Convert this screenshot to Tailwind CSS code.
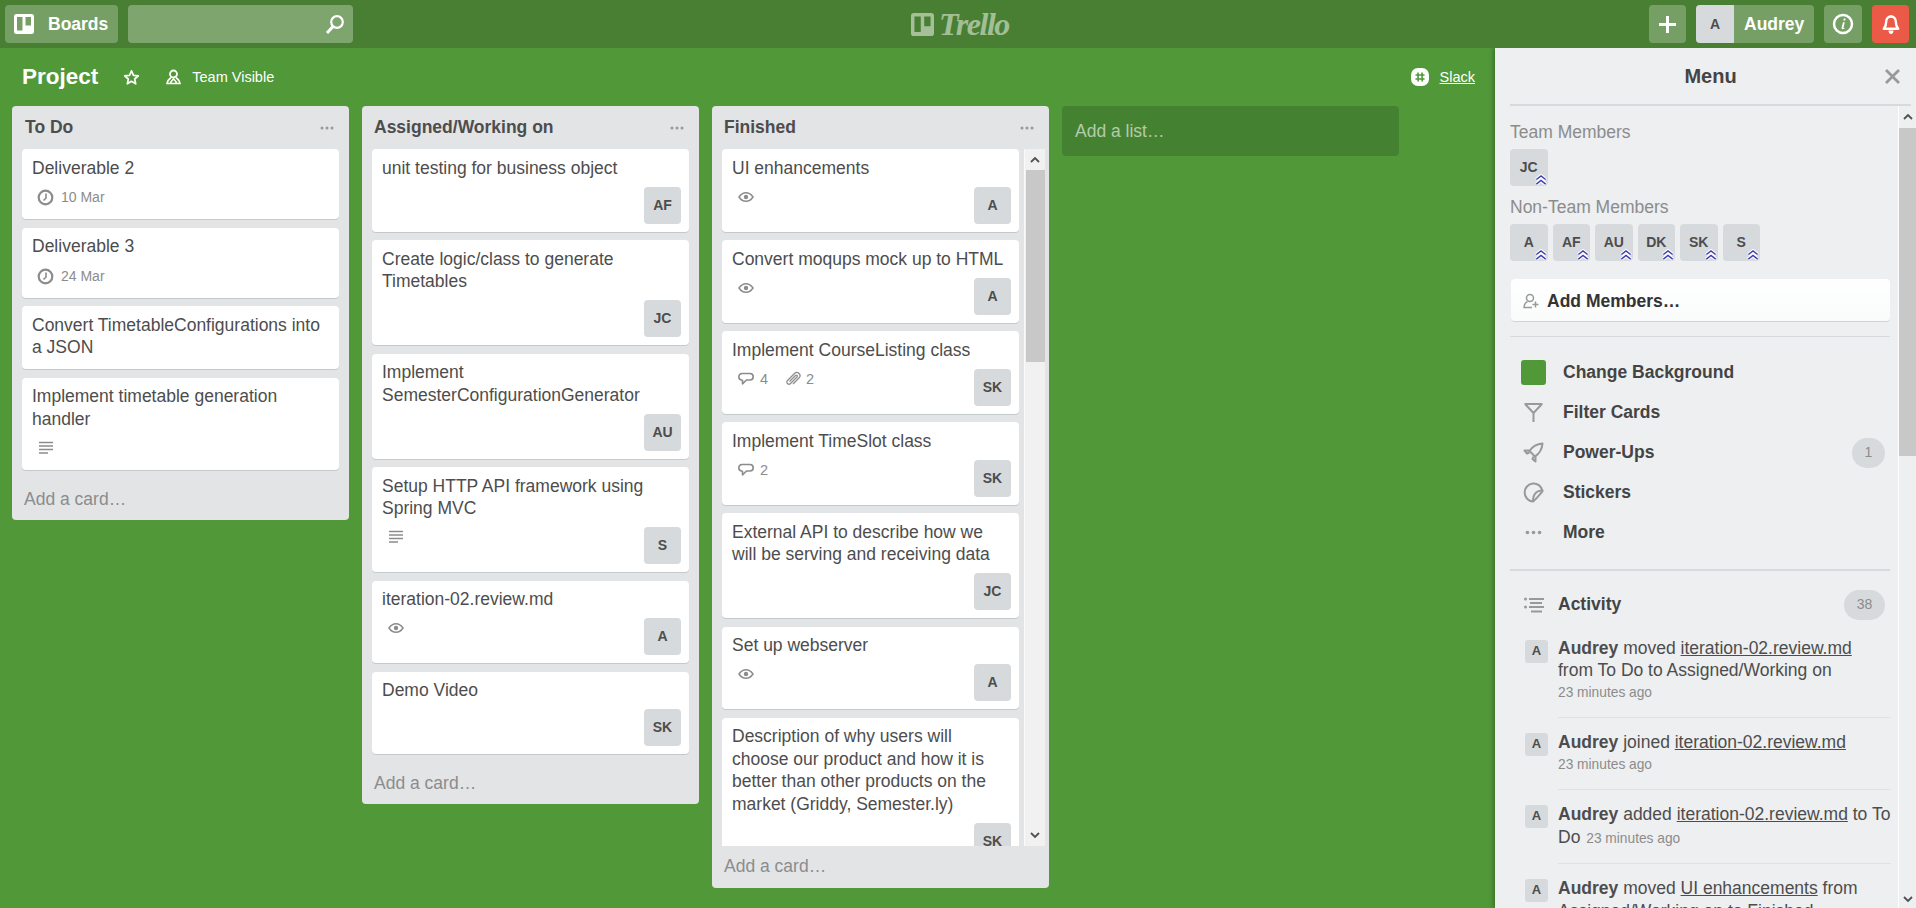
<!DOCTYPE html>
<html lang="en">
<head>
  <meta charset="UTF-8" />
  <title>Project | Trello</title>
  <script src="https://cdn.jsdelivr.net/npm/@tailwindcss/browser@4"></script>
</head>
<body class="h-screen overflow-hidden bg-[#519839] text-[#4d4d4d] text-[17.5px] leading-[22.5px] font-['Liberation_Sans',Arial,sans-serif]">
  <!-- shared icons -->
  <svg class="hidden">
    <symbol id="eye" viewBox="0 0 16 12"><path d="M1 6c2-3 4.300-4.300 7-4.300S13 3 15 6c-2 3-4.300 4.300-7 4.300S3 9 1 6z" fill="none" stroke="currentColor" stroke-width="1.500"/><circle cx="8" cy="6" r="2.200" fill="currentColor"/></symbol>
    <symbol id="clock" viewBox="0 0 17 17"><circle cx="8.500" cy="8.500" r="6.800" fill="none" stroke="currentColor" stroke-width="2.200"/><path d="M9 4.500v4.500L6.500 11.500" fill="none" stroke="currentColor" stroke-width="1.600"/></symbol>
    <symbol id="desc" viewBox="0 0 16 16"><path d="M1 2.500h14M1 6h14M1 9.500h14M1 13h9" stroke="currentColor" stroke-width="1.600"/></symbol>
    <symbol id="comment" viewBox="0 0 16 14"><path d="M4 1.500h8C14 1.500 15.200 3 15.200 4.800S14 8 12 8H8.500L4.500 11.800V8.200H4C2 8 .8 6.600 .8 4.800S2 1.500 4 1.500z" fill="none" stroke="currentColor" stroke-width="1.600" stroke-linejoin="round"/></symbol>
    <symbol id="clip" viewBox="0 0 16 16"><path d="M4.500 10.500 10.500 4.500c1-1 2.500.5 1.500 1.500L5.500 12.500c-2 2-5-1-3-3L9.500 2.500c3-3 7.500 1.500 4.500 4.500L8 13" fill="none" stroke="currentColor" stroke-width="1.300"/></symbol>
    <symbol id="dots" viewBox="0 0 14 4"><circle cx="2" cy="2" r="1.500" fill="currentColor"/><circle cx="7" cy="2" r="1.500" fill="currentColor"/><circle cx="12" cy="2" r="1.500" fill="currentColor"/></symbol>
    <symbol id="board" viewBox="0 0 20 20"><path fill-rule="evenodd" d="M2.500 0h15A2.500 2.500 0 0 1 20 2.500v15a2.500 2.500 0 0 1-2.500 2.500h-15A2.500 2.500 0 0 1 0 17.500v-15A2.500 2.500 0 0 1 2.500 0zM3 3v13.500h5.500V3zM11.500 3v8.500H17V3z" fill="currentColor"/></symbol>
    <symbol id="chev" viewBox="0 0 13 13"><path d="M1.500 6 6.500 2l5 4M1.500 11 6.500 7l5 4" fill="none" stroke="#fff" stroke-width="3.800"/><path d="M1.500 6 6.500 2l5 4M1.500 11 6.500 7l5 4" fill="none" stroke="#3d3db0" stroke-width="1.500"/></symbol>
  </svg>

  <!-- Top bar -->
  <header class="h-12 bg-[#487f32] flex items-center relative">
    <button class="ml-[5px] w-[113px] h-[38px] rounded-[4px] bg-white/25 flex items-center text-white font-bold">
      <svg class="ml-[9px] w-[20px] h-[20px] text-white"><use href="#board"/></svg>
      <span class="ml-[14px]">Boards</span>
    </button>
    <div class="ml-[10px] w-[225px] h-[38px] rounded-[4px] bg-white/30 flex items-center justify-end pr-[8px]">
      <svg class="w-[20px] h-[20px]" viewBox="0 0 20 20" fill="none" stroke="#fff"><circle cx="12" cy="8" r="5.800" stroke-width="2.200"/><path d="M8 12.500 2 19" stroke-width="3"/></svg>
    </div>
    <div class="absolute left-[911px] top-[8px] flex items-center gap-[5px] text-white/50">
      <svg class="w-[23px] h-[23px]"><use href="#board"/></svg>
      <span class="italic font-bold text-[32px] leading-[32px] tracking-[-1.500px] font-['Liberation_Serif',serif]">Trello</span>
    </div>
    <div class="ml-auto pr-[7px] flex items-center text-white">
      <button class="w-[37px] h-[38px] rounded-[4px] bg-white/25 flex items-center justify-center">
        <svg class="w-[19px] h-[19px]" viewBox="0 0 19 19"><path d="M9.500 1v17M1 9.500h17" stroke="#fff" stroke-width="3"/></svg>
      </button>
      <div class="ml-[10px] w-[118px] h-[38px] rounded-[4px] bg-white/25 flex items-center overflow-hidden font-bold">
        <span class="w-[38px] h-full bg-[#d6dadc] text-[#4d4d4d] text-[14px] flex items-center justify-center">A</span>
        <span class="ml-[10px]">Audrey</span>
      </div>
      <button class="ml-[10px] w-[38px] h-[38px] rounded-[4px] bg-white/25 flex items-center justify-center">
        <svg class="w-[22px] h-[22px]" viewBox="0 0 22 22"><circle cx="11" cy="11" r="9" fill="none" stroke="#fff" stroke-width="2.500"/><path d="M11.800 5.500h1.800l-.4 2h-1.800zM11 9.200h1.800l-1.300 5.500c0 .4.400.4 1 .1v1c-1.500.8-3.200.6-2.900-1.100z" fill="#fff"/></svg>
      </button>
      <button class="ml-[10px] w-[37px] h-[38px] rounded-[4px] bg-[#eb5a46] flex items-center justify-center">
        <svg class="w-[18px] h-[21px]" viewBox="0 0 18 21"><path d="M9 2.500c3 0 4.800 2.200 4.800 5.200 0 3 .7 5 2.400 7H1.800c1.700-2 2.400-4 2.400-7 0-3 1.800-5.200 4.800-5.200z" fill="none" stroke="#fff" stroke-width="2.400" stroke-linejoin="round"/><path d="M7.500 1.500h3v2h-3zM6.500 16.500h5c0 2-1 3.500-2.500 3.500s-2.500-1.500-2.500-3.500z" fill="#fff"/></svg>
      </button>
    </div>
  </header>

  <div class="flex h-[860px]">
    <!-- Board -->
    <main class="w-[1495px] shrink-0">
      <div class="h-[58px] flex items-center text-white">
        <h1 class="ml-[22px] text-[22.5px] font-bold">Project</h1>
        <svg class="ml-[25px] w-[17px] h-[17px]" viewBox="0 0 17 17"><path d="M8.500 1.800 10.500 6.300l4.800.5-3.600 3.200 1 4.800-4.200-2.500-4.200 2.500 1-4.800L1.700 6.800l4.800-.5z" fill="none" stroke="#fff" stroke-width="1.700" stroke-linejoin="round"/></svg>
        <svg class="ml-[26px] w-[15px] h-[16px]" viewBox="0 0 15 16"><circle cx="7.500" cy="5" r="3.500" fill="none" stroke="#fff" stroke-width="1.800"/><path d="M5 8.500C3 10 1.500 12 1 14.500h13C13.500 12 12 10 10 8.500M4.500 14.500c0-2 1.500-3 3-4.500 1.500 1.500 3 2.500 3 4.500" fill="none" stroke="#fff" stroke-width="1.600"/></svg>
        <span class="ml-[11px] text-[14.500px]">Team Visible</span>
        <svg class="ml-auto w-[20px] h-[20px]" viewBox="0 0 20 20"><rect x="1" y="1" width="18" height="18" rx="7" fill="#fff"/><path d="M8 5.500 8.200 14.500M12 5.500l.2 9M5.500 8h9M5.500 12h9" stroke="#519839" stroke-width="1.600"/></svg>
        <a class="ml-[10px] mr-[20px] text-[14.500px] underline">Slack</a>
      </div>

      <div class="flex items-start gap-[13px] pl-[12px]">
        <!-- To Do -->
        <section class="w-[337px] rounded-[4px] bg-[#e2e4e6]">
          <div class="h-[43px] pl-[13px] pr-[15px] flex items-center justify-between font-bold">
            <h2>To Do</h2>
            <svg class="w-[14px] h-[4px] text-[#999]"><use href="#dots"/></svg>
          </div>
          <div class="px-[10px] flex flex-col gap-[8.5px]">
            <article class="rounded-[4px] bg-white shadow-[0_1px_0_#c4c9cc] px-[10px] pt-[7.5px] pb-[11.5px]">
              <p>Deliverable 2</p>
              <div class="mt-[8.5px] h-[20px] pl-[5px] flex items-center gap-[7px] text-[14px] text-[#8c8c8c]"><svg class="w-[17px] h-[17px]"><use href="#clock"/></svg>10 Mar</div>
            </article>
            <article class="rounded-[4px] bg-white shadow-[0_1px_0_#c4c9cc] px-[10px] pt-[7.5px] pb-[11.5px]">
              <p>Deliverable 3</p>
              <div class="mt-[8.5px] h-[20px] pl-[5px] flex items-center gap-[7px] text-[14px] text-[#8c8c8c]"><svg class="w-[17px] h-[17px]"><use href="#clock"/></svg>24 Mar</div>
            </article>
            <article class="rounded-[4px] bg-white shadow-[0_1px_0_#c4c9cc] px-[10px] pt-[7.5px] pb-[10.5px]">
              <p>Convert TimetableConfigurations into a JSON</p>
            </article>
            <article class="rounded-[4px] bg-white shadow-[0_1px_0_#c4c9cc] px-[10px] pt-[7.5px] pb-[12.5px]">
              <p>Implement timetable generation handler</p>
              <div class="mt-[7.5px] h-[20px] pl-[6px] flex items-center text-[#8c8c8c]"><svg class="w-[16px] h-[16px]"><use href="#desc"/></svg></div>
            </article>
          </div>
          <div class="h-[50px] mt-[-0.5px] pl-[12px] pt-[9px] flex items-center text-[#8c8c8c]">Add a card…</div>
        </section>

        <!-- Assigned/Working on -->
        <section class="w-[337px] rounded-[4px] bg-[#e2e4e6]">
          <div class="h-[43px] pl-[12px] pr-[15px] flex items-center justify-between font-bold">
            <h2>Assigned/Working on</h2>
            <svg class="w-[14px] h-[4px] text-[#999]"><use href="#dots"/></svg>
          </div>
          <div class="px-[10px] flex flex-col gap-[8.5px]">
            <article class="rounded-[4px] bg-white shadow-[0_1px_0_#c4c9cc] pl-[10px] pr-[8px] pt-[7.5px] pb-[8px]">
              <p>unit testing for business object</p>
              <div class="mt-[7.5px] h-[37px] flex justify-end"><span class="w-[37px] h-[37px] rounded-[4px] bg-[#d6dadc] font-bold text-[14px] flex items-center justify-center">AF</span></div>
            </article>
            <article class="rounded-[4px] bg-white shadow-[0_1px_0_#c4c9cc] pl-[10px] pr-[8px] pt-[7.5px] pb-[8px]">
              <p>Create logic/class to generate Timetables</p>
              <div class="mt-[7.5px] h-[37px] flex justify-end"><span class="w-[37px] h-[37px] rounded-[4px] bg-[#d6dadc] font-bold text-[14px] flex items-center justify-center">JC</span></div>
            </article>
            <article class="rounded-[4px] bg-white shadow-[0_1px_0_#c4c9cc] pl-[10px] pr-[8px] pt-[7.5px] pb-[8px]">
              <p>Implement SemesterConfigurationGenerator</p>
              <div class="mt-[7.5px] h-[37px] flex justify-end"><span class="w-[37px] h-[37px] rounded-[4px] bg-[#d6dadc] font-bold text-[14px] flex items-center justify-center">AU</span></div>
            </article>
            <article class="rounded-[4px] bg-white shadow-[0_1px_0_#c4c9cc] pl-[10px] pr-[8px] pt-[7.5px] pb-[8px]">
              <p>Setup HTTP API framework using Spring MVC</p>
              <div class="mt-[7.5px] h-[37px] pl-[6px] flex justify-between text-[#8c8c8c]"><svg class="mt-[2px] w-[16px] h-[16px]"><use href="#desc"/></svg><span class="w-[37px] h-[37px] rounded-[4px] bg-[#d6dadc] text-[#4d4d4d] font-bold text-[14px] flex items-center justify-center">S</span></div>
            </article>
            <article class="rounded-[4px] bg-white shadow-[0_1px_0_#c4c9cc] pl-[10px] pr-[8px] pt-[7.5px] pb-[8px]">
              <p>iteration-02.review.md</p>
              <div class="mt-[7.5px] h-[37px] pl-[6px] flex justify-between text-[#8c8c8c]"><svg class="mt-[4px] w-[16px] h-[12px]"><use href="#eye"/></svg><span class="w-[37px] h-[37px] rounded-[4px] bg-[#d6dadc] text-[#4d4d4d] font-bold text-[14px] flex items-center justify-center">A</span></div>
            </article>
            <article class="rounded-[4px] bg-white shadow-[0_1px_0_#c4c9cc] pl-[10px] pr-[8px] pt-[7.5px] pb-[8px]">
              <p>Demo Video</p>
              <div class="mt-[7.5px] h-[37px] flex justify-end"><span class="w-[37px] h-[37px] rounded-[4px] bg-[#d6dadc] font-bold text-[14px] flex items-center justify-center">SK</span></div>
            </article>
          </div>
          <div class="h-[50px] mt-[-0.5px] pl-[12px] pt-[9px] flex items-center text-[#8c8c8c]">Add a card…</div>
        </section>

        <!-- Finished: the card column scrolls in the original -->
        <section class="w-[337px] rounded-[4px] bg-[#e2e4e6]">
          <div class="h-[43px] pl-[12px] pr-[15px] flex items-center justify-between font-bold">
            <h2>Finished</h2>
            <svg class="w-[14px] h-[4px] text-[#999]"><use href="#dots"/></svg>
          </div>
          <div class="h-[697px] pl-[10px] flex gap-[5px]">
            <div class="w-[297px] shrink-0 h-full overflow-hidden flex flex-col gap-[8.5px]">
              <article class="shrink-0 rounded-[4px] bg-white shadow-[0_1px_0_#c4c9cc] pl-[10px] pr-[8px] pt-[7.5px] pb-[8px]">
                <p>UI enhancements</p>
                <div class="mt-[7.5px] h-[37px] pl-[6px] flex justify-between text-[#8c8c8c]"><svg class="mt-[4px] w-[16px] h-[12px]"><use href="#eye"/></svg><span class="w-[37px] h-[37px] rounded-[4px] bg-[#d6dadc] text-[#4d4d4d] font-bold text-[14px] flex items-center justify-center">A</span></div>
              </article>
              <article class="shrink-0 rounded-[4px] bg-white shadow-[0_1px_0_#c4c9cc] pl-[10px] pr-[8px] pt-[7.5px] pb-[8px]">
                <p class="whitespace-nowrap">Convert moqups mock up to HTML</p>
                <div class="mt-[7.5px] h-[37px] pl-[6px] flex justify-between text-[#8c8c8c]"><svg class="mt-[4px] w-[16px] h-[12px]"><use href="#eye"/></svg><span class="w-[37px] h-[37px] rounded-[4px] bg-[#d6dadc] text-[#4d4d4d] font-bold text-[14px] flex items-center justify-center">A</span></div>
              </article>
              <article class="shrink-0 rounded-[4px] bg-white shadow-[0_1px_0_#c4c9cc] pl-[10px] pr-[8px] pt-[7.5px] pb-[8px]">
                <p>Implement CourseListing class</p>
                <div class="mt-[7.5px] h-[37px] pl-[6px] flex text-[14.500px] text-[#8c8c8c]">
                  <svg class="mt-[3px] w-[16px] h-[14px]"><use href="#comment"/></svg><span class="ml-[6px] leading-[20px]">4</span>
                  <svg class="ml-[17px] mt-[2px] w-[16px] h-[16px]"><use href="#clip"/></svg><span class="ml-[5px] leading-[20px]">2</span>
                  <span class="ml-auto w-[37px] h-[37px] rounded-[4px] bg-[#d6dadc] text-[#4d4d4d] font-bold text-[14px] flex items-center justify-center">SK</span>
                </div>
              </article>
              <article class="shrink-0 rounded-[4px] bg-white shadow-[0_1px_0_#c4c9cc] pl-[10px] pr-[8px] pt-[7.5px] pb-[8px]">
                <p>Implement TimeSlot class</p>
                <div class="mt-[7.5px] h-[37px] pl-[6px] flex text-[14.500px] text-[#8c8c8c]">
                  <svg class="mt-[3px] w-[16px] h-[14px]"><use href="#comment"/></svg><span class="ml-[6px] leading-[20px]">2</span>
                  <span class="ml-auto w-[37px] h-[37px] rounded-[4px] bg-[#d6dadc] text-[#4d4d4d] font-bold text-[14px] flex items-center justify-center">SK</span>
                </div>
              </article>
              <article class="shrink-0 rounded-[4px] bg-white shadow-[0_1px_0_#c4c9cc] pl-[10px] pr-[8px] pt-[7.5px] pb-[8px]">
                <p>External API to describe how we will be serving and receiving data</p>
                <div class="mt-[7.5px] h-[37px] flex justify-end"><span class="w-[37px] h-[37px] rounded-[4px] bg-[#d6dadc] font-bold text-[14px] flex items-center justify-center">JC</span></div>
              </article>
              <article class="shrink-0 rounded-[4px] bg-white shadow-[0_1px_0_#c4c9cc] pl-[10px] pr-[8px] pt-[7.5px] pb-[8px]">
                <p>Set up webserver</p>
                <div class="mt-[7.5px] h-[37px] pl-[6px] flex justify-between text-[#8c8c8c]"><svg class="mt-[4px] w-[16px] h-[12px]"><use href="#eye"/></svg><span class="w-[37px] h-[37px] rounded-[4px] bg-[#d6dadc] text-[#4d4d4d] font-bold text-[14px] flex items-center justify-center">A</span></div>
              </article>
              <article class="shrink-0 rounded-[4px] bg-white shadow-[0_1px_0_#c4c9cc] pl-[10px] pr-[8px] pt-[7.5px] pb-[8px]">
                <p>Description of why users will choose our product and how it is better than other products on the market (Griddy, Semester.ly)</p>
                <div class="mt-[7.5px] h-[37px] flex justify-end"><span class="w-[37px] h-[37px] rounded-[4px] bg-[#d6dadc] font-bold text-[14px] flex items-center justify-center">SK</span></div>
              </article>
            </div>
            <div class="w-[21px] h-full bg-[#f1f1f1] border-l border-[#fafafa] flex flex-col items-center">
              <svg class="h-[21px] w-[12px] shrink-0" viewBox="0 0 12 21"><path d="M2 13l4-4 4 4" fill="none" stroke="#505050" stroke-width="1.800"/></svg>
              <div class="w-[19px] h-[192px] bg-[#c8c8c8]"></div>
              <svg class="mt-auto h-[21px] w-[12px] shrink-0" viewBox="0 0 12 21"><path d="M2 8l4 4 4-4" fill="none" stroke="#505050" stroke-width="1.800"/></svg>
            </div>
          </div>
          <div class="h-[42px] pl-[12px] pb-[2px] flex items-center text-[#8c8c8c]">Add a card…</div>
        </section>

        <!-- Add a list -->
        <div class="w-[337px] h-[50px] rounded-[4px] bg-black/15 pl-[13px] flex items-center text-white/60">Add a list…</div>
      </div>
    </main>

    <!-- Menu -->
    <aside class="w-[421px] shrink-0 h-full bg-[#edeff0] shadow-[-2px_0_4px_rgba(0,0,0,0.25)] flex flex-col">
      <div class="h-[58px] shrink-0 mx-[15px] mr-[5px] border-b-2 border-[#d6dadc] relative flex items-center justify-center text-[#444]">
        <h2 class="font-bold text-[20px]">Menu</h2>
        <svg class="absolute right-[11px] top-[21px] w-[15px] h-[15px]" viewBox="0 0 15 15"><path d="M1 1l13 13M14 1L1 14" stroke="#999" stroke-width="2.800"/></svg>
      </div>
      <div class="flex-1 min-h-0 flex">
        <div class="w-[403px] shrink-0 overflow-hidden pl-[15px] pr-[8px] pt-[15px]">
          <h3 class="text-[#8c8c8c] mb-[5.5px]">Team Members</h3>
          <div class="flex gap-[5px] text-[14px] font-bold">
            <span class="relative w-[37.5px] h-[37px] rounded-[4px] bg-[#d6dadc] flex items-center justify-center">JC<svg class="absolute right-px bottom-0 w-[12px] h-[12px]"><use href="#chev"/></svg></span>
          </div>
          <h3 class="mt-[10px] mb-[5.5px] text-[#8c8c8c]">Non-Team Members</h3>
          <div class="flex gap-[5px] text-[14px] font-bold">
            <span class="relative w-[37.5px] h-[37px] rounded-[4px] bg-[#d6dadc] flex items-center justify-center">A<svg class="absolute right-px bottom-0 w-[12px] h-[12px]"><use href="#chev"/></svg></span>
            <span class="relative w-[37.5px] h-[37px] rounded-[4px] bg-[#d6dadc] flex items-center justify-center">AF<svg class="absolute right-px bottom-0 w-[12px] h-[12px]"><use href="#chev"/></svg></span>
            <span class="relative w-[37.5px] h-[37px] rounded-[4px] bg-[#d6dadc] flex items-center justify-center">AU<svg class="absolute right-px bottom-0 w-[12px] h-[12px]"><use href="#chev"/></svg></span>
            <span class="relative w-[37.5px] h-[37px] rounded-[4px] bg-[#d6dadc] flex items-center justify-center">DK<svg class="absolute right-px bottom-0 w-[12px] h-[12px]"><use href="#chev"/></svg></span>
            <span class="relative w-[37.5px] h-[37px] rounded-[4px] bg-[#d6dadc] flex items-center justify-center">SK<svg class="absolute right-px bottom-0 w-[12px] h-[12px]"><use href="#chev"/></svg></span>
            <span class="relative w-[37.5px] h-[37px] rounded-[4px] bg-[#d6dadc] flex items-center justify-center">S<svg class="absolute right-px bottom-0 w-[12px] h-[12px]"><use href="#chev"/></svg></span>
          </div>
          <button class="mt-[18px] w-[379px] h-[42px] pt-[2px] ml-px rounded-[4px] bg-gradient-to-b from-white to-[#fafbfb] shadow-[0_1px_0_#d0d4d6] flex items-center font-bold text-[#333]">
            <svg class="ml-[12px] w-[16px] h-[16px] text-[#999]" viewBox="0 0 16 16" fill="none" stroke="currentColor" stroke-width="1.500"><circle cx="7" cy="5" r="3.500"/><path d="M4.500 8.500C2.500 9.500 1.200 11.500 1 14.500h8M12.500 8.500v6M9.500 11.500h6"/></svg>
            <span class="ml-[8px]">Add Members…</span>
          </button>
          <hr class="mt-[15px] border-[#d6dadc]" />
          <ul class="mt-[15.5px] font-bold text-[#444]">
            <li class="h-[40px] flex items-center"><span class="ml-[11px] w-[25px] h-[25px] rounded-[3px] bg-[#519839]"></span><span class="ml-[17px]">Change Background</span></li>
            <li class="h-[40px] flex items-center"><svg class="ml-[13px] w-[21px] h-[21px] text-[#999]" viewBox="0 0 21 21" fill="none" stroke="currentColor" stroke-width="2"><path d="M1.500 2h18M2.500 2.500 10.500 11l8-8.500M10.500 11v9"/></svg><span class="ml-[19px]">Filter Cards</span></li>
            <li class="h-[40px] flex items-center"><svg class="ml-[13px] w-[21px] h-[21px] text-[#999]" viewBox="0 0 21 21" fill="none" stroke="currentColor" stroke-width="2" stroke-linejoin="round"><path d="M19.500 1.500C13.500 2 9.500 4.500 6.500 9l5.500 5.500c4.500-3 7-7 7.500-13z"/><path d="M7 8.500H1.500L4 11.500l2.500-1M12.500 14v5.500l-3-2.500 1-2.500"/></svg><span class="ml-[19px]">Power-Ups</span><span class="ml-auto mr-[5px] w-[33px] h-[30px] rounded-full bg-[#d6dadc] text-[#8c8c8c] font-normal text-[14px] flex items-center justify-center">1</span></li>
            <li class="h-[40px] flex items-center"><svg class="ml-[13px] w-[21px] h-[21px] text-[#999]" viewBox="0 0 21 21" fill="none" stroke="currentColor" stroke-width="2"><path d="M19.500 9A9 9 0 1 0 10 19.500c1.500-1 8.500-8.500 9.500-10.500-3.500-1-9.500 1-9.500 10.500"/></svg><span class="ml-[19px]">Stickers</span></li>
            <li class="h-[40px] flex items-center"><svg class="ml-[15px] w-[17px] h-[5px] text-[#999]"><use href="#dots"/></svg><span class="ml-[21px]">More</span></li>
          </ul>
          <hr class="mt-[16px] border-t-2 border-[#d6dadc]" />
          <div class="mt-[19px] h-[30px] flex items-center font-bold text-[#444]">
            <svg class="ml-[14px] w-[20px] h-[16px] text-[#999]" viewBox="0 0 20 16"><path d="M5 2h15M6 6h12M5 10h15M7 14.500h11" stroke="currentColor" stroke-width="2"/><circle cx="1.500" cy="2" r="1.500" fill="currentColor"/><circle cx="1.500" cy="10" r="1.500" fill="currentColor"/></svg>
            <span class="ml-[14px]">Activity</span>
            <span class="ml-auto mr-[5px] w-[41px] h-[30px] rounded-full bg-[#d6dadc] text-[#8c8c8c] font-normal text-[14px] flex items-center justify-center">38</span>
          </div>
          <ul class="mt-[17px]">
            <li class="flex">
              <span class="ml-[15px] mt-[3px] w-[23px] h-[23px] shrink-0 rounded-[3px] bg-[#d6dadc] font-bold text-[13px] flex items-center justify-center">A</span>
              <div class="ml-[10px] w-[333px] shrink-0 border-b border-[#dfe2e4] pb-[13px] mb-[13px]"><b>Audrey</b> moved <a class="underline">iteration-02.review.md</a> from To Do to Assigned/Working on<time class="block text-[13.750px] text-[#8c8c8c]">23 minutes ago</time></div>
            </li>
            <li class="flex">
              <span class="ml-[15px] mt-[2px] w-[23px] h-[23px] shrink-0 rounded-[3px] bg-[#d6dadc] font-bold text-[13px] flex items-center justify-center">A</span>
              <div class="ml-[10px] w-[333px] shrink-0 border-b border-[#dfe2e4] pb-[13px] mb-[13px]"><b>Audrey</b> joined <a class="underline">iteration-02.review.md</a><time class="block text-[13.750px] text-[#8c8c8c]">23 minutes ago</time></div>
            </li>
            <li class="flex">
              <span class="ml-[15px] mt-[2px] w-[23px] h-[23px] shrink-0 rounded-[3px] bg-[#d6dadc] font-bold text-[13px] flex items-center justify-center">A</span>
              <div class="ml-[10px] w-[333px] shrink-0 border-b border-[#dfe2e4] pb-[13px] mb-[13px]"><b>Audrey</b> added <a class="underline">iteration-02.review.md</a> to To Do <time class="ml-px text-[13.750px] text-[#8c8c8c]">23 minutes ago</time></div>
            </li>
            <li class="flex">
              <span class="ml-[15px] mt-[2px] w-[23px] h-[23px] shrink-0 rounded-[3px] bg-[#d6dadc] font-bold text-[13px] flex items-center justify-center">A</span>
              <div class="ml-[10px] w-[333px] shrink-0"><b>Audrey</b> moved <a class="underline">UI enhancements</a> from Assigned/Working on to Finished</div>
            </li>
          </ul>
        </div>
        <div class="w-[18px] h-full shrink-0 bg-[#edeff0] border-l border-white flex flex-col items-center">
          <svg class="h-[22px] w-[12px] shrink-0" viewBox="0 0 12 22"><path d="M2 13l4-4 4 4" fill="none" stroke="#505050" stroke-width="1.800"/></svg>
          <div class="w-full h-[328px] bg-[#c8c8c8]"></div>
          <svg class="mt-auto h-[16px] w-[12px] shrink-0" viewBox="0 0 12 16"><path d="M2 5l4 4 4-4" fill="none" stroke="#505050" stroke-width="1.800"/></svg>
        </div>
      </div>
    </aside>
  </div>
</body>
</html>
